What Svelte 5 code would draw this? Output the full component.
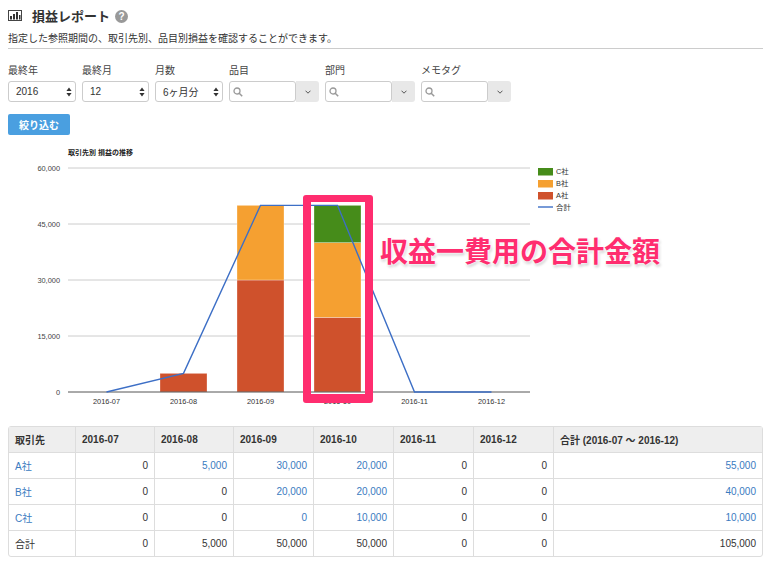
<script>
  const filters = [
    { label: '最終年', value: '2016', width: 68 },
    { label: '最終月', value: '12', width: 67 },
    { label: '月数', value: '6ヶ月分', width: 68 }
  ];
  const combos = ['品目', '部門', 'メモタグ'];

  const months = ['2016-07', '2016-08', '2016-09', '2016-10', '2016-11', '2016-12'];
  const rows = [
    { name: 'A社', color: '#cf512c', values: [0, 5000, 30000, 20000, 0, 0], total: 55000 },
    { name: 'B社', color: '#f5a031', values: [0, 0, 20000, 20000, 0, 0], total: 40000 },
    { name: 'C社', color: '#468c1a', values: [0, 0, 0, 10000, 0, 0], total: 10000 }
  ];
  const sums = [0, 5000, 50000, 50000, 0, 0];

  // チャートの座標はページ座標のまま（viewBoxで合わせる）
  const plotLeft = 68;
  const plotRight = 530;
  const plotBase = 392;
  const plotTop = 168;
  const barWidth = 47;
  const ticks = [60000, 45000, 30000, 15000];

  const y = (v) => plotBase - (v / 60000) * (plotBase - plotTop);
  const cx = (i) => plotLeft + (plotRight - plotLeft) * (i + 0.5) / 6;
  const fmt = (n) => n.toLocaleString('en-US');

  const bars = [];
  months.forEach((_, i) => {
    let acc = 0;
    rows.forEach((r) => {
      const v = r.values[i];
      if (v > 0) {
        bars.push({ x: cx(i) - barWidth / 2, y: y(acc + v), h: y(acc) - y(acc + v), color: r.color });
      }
      acc += v;
    });
  });
  const linePoints = sums.map((v, i) => `${cx(i)},${y(v)}`).join(' ');
  const legend = [...rows].reverse();
</script>

<div class="page">
  <h1 class="title">
    <svg class="title-icon" width="14" height="11" viewBox="0 0 14 11">
      <rect x="0.5" y="0.5" width="13" height="10" fill="none" stroke="#444" />
      <rect x="2" y="6" width="2" height="3.5" fill="#333" />
      <rect x="5" y="4" width="2" height="5.5" fill="#333" />
      <rect x="8" y="2" width="2" height="7.5" fill="#333" />
      <rect x="11" y="5" width="1.5" height="4.5" fill="#333" />
    </svg>
    損益レポート
    <span class="help">?</span>
  </h1>
  <p class="desc">指定した参照期間の、取引先別、品目別損益を確認することができます。</p>

  <div class="filters">
    {#each filters as f}
      <div class="field">
        <span class="label">{f.label}</span>
        <div class="select" style="width:{f.width}px">
          <span>{f.value}</span>
          <svg width="6" height="10" viewBox="0 0 6 10">
            <path d="M3 0.5 L5.6 4 H0.4 Z M3 9.5 L0.4 6 H5.6 Z" fill="#333" />
          </svg>
        </div>
      </div>
    {/each}
    {#each combos as c}
      <div class="field">
        <span class="label">{c}</span>
        <div class="combo">
          <div class="combo-input">
            <svg width="10" height="10" viewBox="0 0 10 10">
              <circle cx="4" cy="4" r="3" fill="none" stroke="#999" stroke-width="1.3" />
              <path d="M6.2 6.2 L9.2 9.2" stroke="#999" stroke-width="1.5" />
            </svg>
          </div>
          <div class="combo-btn">
            <svg width="6" height="4" viewBox="0 0 6 4">
              <path d="M0.5 0.7 L3 3.2 L5.5 0.7" fill="none" stroke="#555" stroke-width="1" />
            </svg>
          </div>
        </div>
      </div>
    {/each}
  </div>

  <button class="submit">絞り込む</button>

  <div class="chart">
    <svg width="570" height="270" viewBox="8 140 570 270">
      <text x={plotLeft} y="155" class="chart-title">取引先別 損益の推移</text>
      {#each ticks as t}
        <line x1={plotLeft} x2={plotRight} y1={y(t)} y2={y(t)} stroke="#ccc" />
        <text x="60" y={y(t) + 2.5} text-anchor="end" class="tick">{fmt(t)}</text>
      {/each}
      <text x="60" y={plotBase + 2.5} text-anchor="end" class="tick">0</text>
      {#each bars as b}
        <rect x={b.x} y={b.y} width={barWidth} height={b.h} fill={b.color} stroke="#fff" stroke-opacity="0.5" stroke-width="0.6" />
      {/each}
      <line x1={plotLeft} x2={plotRight} y1={plotBase} y2={plotBase} stroke="#555" />
      <polyline points={linePoints} fill="none" stroke="#3d6fc6" stroke-width="1.4" />
      {#each months as m, i}
        <text x={cx(i)} y="404" text-anchor="middle" class="tick dark">{m}</text>
      {/each}
      {#each legend as l, i}
        <rect x="538" y={168 + i * 12} width="15" height="7.5" fill={l.color} />
        <text x="556" y={174 + i * 12} class="tick dark">{l.name}</text>
      {/each}
      <line x1="538" x2="553" y1="207" y2="207" stroke="#3d6fc6" stroke-width="1.4" />
      <text x="556" y="210" class="tick dark">合計</text>
    </svg>
    <div class="highlight"></div>
    <div class="annotation">収益一費用の合計金額</div>
  </div>

  <table>
    <colgroup>
      <col style="width:66px" />
      <col style="width:79px" />
      <col style="width:79px" />
      <col style="width:80px" />
      <col style="width:80px" />
      <col style="width:80px" />
      <col style="width:80px" />
      <col />
    </colgroup>
    <thead>
      <tr>
        <th>取引先</th>
        {#each months as m}<th>{m}</th>{/each}
        <th>合計 (2016-07 〜 2016-12)</th>
      </tr>
    </thead>
    <tbody>
      {#each rows as r}
        <tr>
          <td class="name"><a href="#top">{r.name}</a></td>
          {#each r.values as v, i}
            <td>
              {#if v > 0 || (r.name === 'C社' && i === 2)}
                <a href="#top">{fmt(v)}</a>
              {:else}
                {fmt(v)}
              {/if}
            </td>
          {/each}
          <td><a href="#top">{fmt(r.total)}</a></td>
        </tr>
      {/each}
      <tr>
        <td class="name">合計</td>
        {#each sums as s}<td>{fmt(s)}</td>{/each}
        <td>105,000</td>
      </tr>
    </tbody>
  </table>
</div>

<style>
  :global(body) {
    margin: 0;
    background: #fff;
    color: #333;
    font-family: "Liberation Sans", "Noto Sans CJK JP", sans-serif;
  }

  .page {
    padding: 7px 9px 0 8px;
    width: 772px;
    box-sizing: border-box;
  }

  .title {
    display: flex;
    align-items: center;
    margin: 0;
    height: 16px;
    font-size: 13px;
    font-weight: bold;
    color: #333;
  }

  .title-icon {
    margin-right: 10px;
  }

  .help {
    display: inline-flex;
    align-items: center;
    justify-content: center;
    width: 13px;
    height: 13px;
    margin: 3px 0 0 5px;
    border-radius: 50%;
    background: #999;
    color: #fff;
    font-size: 10px;
    font-weight: bold;
  }

  .desc {
    margin: 8px 0 0;
    padding-bottom: 2px;
    height: 15px;
    line-height: 15px;
    font-size: 10px;
    color: #333;
    border-bottom: 1px solid #ccc;
  }

  .filters {
    display: flex;
    gap: 6px;
    margin-top: 14px;
  }

  .field {
    display: flex;
    flex-direction: column;
    gap: 3px;
  }

  .label {
    height: 15px;
    line-height: 16px;
    font-size: 10px;
    color: #444;
  }

  .select {
    display: flex;
    align-items: center;
    justify-content: space-between;
    box-sizing: border-box;
    height: 21px;
    padding: 0 3px 0 7px;
    border: 1px solid #ccc;
    border-radius: 3px;
    font-size: 10px;
    color: #333;
  }

  .combo {
    display: flex;
    width: 90px;
    height: 21px;
  }

  .combo-input {
    display: flex;
    align-items: center;
    box-sizing: border-box;
    width: 67px;
    padding-left: 3px;
    border: 1px solid #ccc;
    border-radius: 3px;
  }

  .combo-btn {
    display: flex;
    align-items: center;
    justify-content: center;
    flex: 1;
    background: #e8e8e8;
    border-radius: 0 3px 3px 0;
  }

  .submit {
    display: block;
    width: 62px;
    height: 21px;
    margin: 12px 0 0;
    padding: 0;
    border: none;
    border-radius: 2px;
    background: #4a9fe0;
    color: #fff;
    font-family: inherit;
    font-size: 10px;
    font-weight: bold;
  }

  .chart {
    position: relative;
    height: 286px;
    margin-top: 5px;
  }

  .chart svg {
    display: block;
  }

  .chart-title {
    font-size: 7px;
    font-weight: bold;
    fill: #222;
  }

  .tick {
    font-size: 7.4px;
    fill: #444;
  }

  .tick.dark {
    fill: #333;
  }

  .highlight {
    position: absolute;
    left: 295px;
    top: 55px;
    width: 70px;
    height: 208px;
    box-sizing: border-box;
    border: 8px solid #ff2d6f;
    border-top-width: 7px;
    border-bottom-width: 9px;
    border-radius: 3px;
  }

  .annotation {
    position: absolute;
    left: 372px;
    top: 95px;
    line-height: 36px;
    font-size: 28px;
    font-weight: bold;
    white-space: nowrap;
    color: #ff2d6f;
    text-shadow: 0 0 2px #fff, 0 0 4px #fff, 0 0 4px #fff, 1px 2px 3px rgba(0, 0, 0, 0.3);
  }

  table {
    width: 755px;
    table-layout: fixed;
    border-collapse: separate;
    border-spacing: 0;
    border: 1px solid #ddd;
    border-radius: 3px;
    font-size: 10px;
  }

  th,
  td {
    height: 25px;
    padding: 0 6px;
    border-left: 1px solid #ddd;
    border-top: 1px solid #ddd;
    text-align: right;
    color: #333;
  }

  th:first-child,
  td:first-child {
    border-left: none;
  }

  th {
    background: #eee;
    border-top: none;
    text-align: left;
    font-weight: bold;
  }

  td.name {
    text-align: left;
  }

  a {
    color: #3a7bbf;
    text-decoration: none;
  }
</style>
